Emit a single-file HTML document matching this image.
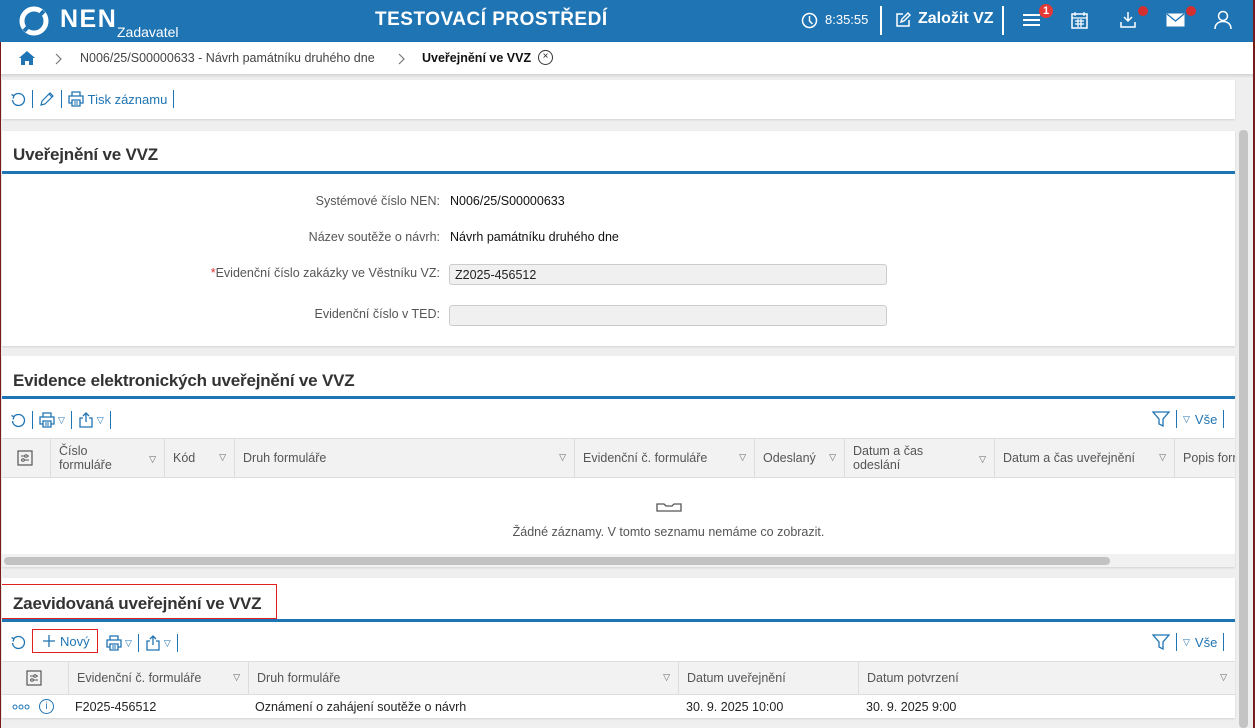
<!DOCTYPE html>
<html><head><meta charset="utf-8"><style>
*{box-sizing:border-box;margin:0;padding:0}
body{width:1255px;height:728px;overflow:hidden;background:#efefef;font-family:"Liberation Sans",sans-serif;font-size:12.5px;color:#222;position:relative}
.abs{position:absolute}
.hdr{left:0;top:0;width:1255px;height:42px;background:#1f74b4;color:#fff}
.panel{background:#fff;left:2px;width:1233px;box-shadow:0 1px 2px rgba(0,0,0,.12)}
.title{font-weight:bold;font-size:17px;color:#333;letter-spacing:-0.2px}
.bline{height:3px;background:#1f74b4;left:0;width:1233px}
.lbl{color:#555;text-align:right;width:260px;left:180px}
.val{left:450px;color:#111}
.inp{left:449px;width:438px;height:21px;background:#f0f0f0;border:1px solid #ccc;border-radius:3px;padding:3px 5px;font-size:12.5px}
.th{background:#f2f2f2;border-top:1px solid #ddd;border-bottom:1px solid #ddd;height:40px}
.c{position:absolute;top:0;height:100%;border-left:1px solid #ddd;color:#555;padding:0 8px;display:flex;align-items:center;white-space:nowrap;overflow:hidden}
.tri{position:absolute;right:8px;top:50%;margin-top:-6px;font-size:9px;color:#666}
.sep{display:inline-block;width:1px;height:18px;background:#1f74b4;vertical-align:middle;margin:0 6px}
.blue{color:#1f74b4}
.tb{display:flex;align-items:center;color:#1f74b4}
.tb svg{display:block}
.st{font-size:9px;margin-left:3px}
</style></head><body>
<svg width="0" height="0" style="position:absolute">
<defs>
<symbol id="ref" viewBox="0 0 16 16"><path d="M4 4.5A6 6 0 1 1 2.5 9" fill="none" stroke="#1f74b4" stroke-width="1.3"/><path d="M1.5 3.5L4 4.8 3 7.5" fill="none" stroke="#1f74b4" stroke-width="1.3"/></symbol>
<symbol id="prn" viewBox="0 0 16 16"><path d="M4 5V1h8v4M4 12H1V5h14v7h-3M4 9h8v6H4z" fill="none" stroke="#1f74b4" stroke-width="1.3"/><path d="M6 11h4M6 13h4" stroke="#1f74b4" stroke-width="1"/></symbol>
<symbol id="shr" viewBox="0 0 16 16"><path d="M5 6H2v9h12V6h-3M8 10V1M5 4l3-3 3 3" fill="none" stroke="#1f74b4" stroke-width="1.3"/></symbol>
<symbol id="fun" viewBox="0 0 18 18"><path d="M1 2h16l-6 7v7l-4 -2V9z" fill="none" stroke="#1f74b4" stroke-width="1.3"/></symbol>
<symbol id="set" viewBox="0 0 16 16"><rect x="1" y="1" width="14" height="14" fill="none" stroke="#555" stroke-width="1.2"/><path d="M4 6h8M4 10h8" stroke="#555"/><circle cx="9" cy="6" r="1.3" fill="#fff" stroke="#555"/><circle cx="6" cy="10" r="1.3" fill="#fff" stroke="#555"/></symbol>
</defs></svg>
<div class="abs" style="right:0;top:0;width:2px;height:728px;background:#7a1b1b;z-index:9"></div>
<div class="abs" style="left:0;top:42px;width:1px;height:686px;background:#7a1b1b;z-index:9"></div>
<!-- header -->
<div class="abs hdr">
 <svg class="abs" style="left:18px;top:5px" width="32" height="32" viewBox="0 0 32 32"><circle cx="16" cy="16" r="12" fill="none" stroke="#fff" stroke-width="5"/><path d="M6 26 L26 6" stroke="#1f74b4" stroke-width="4"/></svg>
 <div class="abs" style="left:60px;top:5px;font-size:25px;font-weight:bold;letter-spacing:1.5px">NEN</div>
 <div class="abs" style="left:117px;top:24px;font-size:14px">Zadavatel</div>
 <div class="abs" style="left:375px;top:9px;font-size:19px;font-weight:bold;letter-spacing:.5px">TESTOVACÍ PROSTŘEDÍ</div>
 <svg class="abs" style="left:801px;top:12px" width="17" height="17" viewBox="0 0 17 17"><circle cx="8.5" cy="8.5" r="7" fill="none" stroke="#fff" stroke-width="1.5"/><path d="M8.5 4v5l3 3" fill="none" stroke="#fff" stroke-width="1.5"/></svg>
 <div class="abs" style="left:825px;top:12px;font-size:13px">8:35:55</div>
 <div class="abs" style="left:880px;top:6px;width:2px;height:29px;background:#fff"></div>
 <svg class="abs" style="left:894px;top:11px" width="18" height="18" viewBox="0 0 18 18"><path d="M9 3H3v12h12V9" fill="none" stroke="#fff" stroke-width="1.5"/><path d="M7 11l1-3 6-6 2 2-6 6z" fill="none" stroke="#fff" stroke-width="1.4"/></svg>
 <div class="abs" style="left:918px;top:10px;font-size:16px;font-weight:bold">Založit VZ</div>
 <div class="abs" style="left:1002px;top:6px;width:2px;height:29px;background:#fff"></div>
 <svg class="abs" style="left:1023px;top:13px" width="18" height="14"><path d="M0 2h17M0 7h17M0 12h17" stroke="#fff" stroke-width="2"/></svg>
 <div class="abs" style="left:1039px;top:4px;width:14px;height:14px;border-radius:7px;background:#e53935;font-size:11px;text-align:center;line-height:14px;font-weight:bold">1</div>
 <svg class="abs" style="left:1071px;top:11px" width="17" height="18" viewBox="0 0 17 18"><rect x="1" y="3" width="15" height="14" fill="none" stroke="#fff" stroke-width="1.5"/><path d="M1 7h15M4 1v4M13 1v4M4 10h9M4 13h9M7 8v8M10 8v8" stroke="#fff" stroke-width="1.2"/></svg>
 <svg class="abs" style="left:1119px;top:11px" width="18" height="18" viewBox="0 0 18 18"><path d="M9 1v9M5 6l4 4 4-4M2 11v5h14v-5" fill="none" stroke="#fff" stroke-width="1.5"/></svg>
 <div class="abs" style="left:1138px;top:6px;width:10px;height:10px;border-radius:5px;background:#d32f2f"></div>
 <svg class="abs" style="left:1166px;top:13px" width="19" height="14"><rect x="0.5" y="0.5" width="18" height="13" fill="#fff"/><path d="M1 1l8.5 7L18 1" fill="none" stroke="#1f74b4" stroke-width="1.3"/></svg>
 <div class="abs" style="left:1186px;top:6px;width:10px;height:10px;border-radius:5px;background:#d32f2f"></div>
 <svg class="abs" style="left:1214px;top:10px" width="18" height="19"><circle cx="9" cy="6" r="4.5" fill="none" stroke="#fff" stroke-width="1.5"/><path d="M1 19c0-5 3.5-7.5 8-7.5s8 2.5 8 7.5" fill="none" stroke="#fff" stroke-width="1.5"/></svg>
</div>
<!-- breadcrumb -->
<div class="abs" style="left:0;top:42px;width:1255px;height:32px;background:#fff;box-shadow:0 2px 3px rgba(0,0,0,.12)">
 <svg class="abs" style="left:18px;top:8px" width="18" height="16" viewBox="0 0 18 16"><path d="M9 1L1 8h2v7h4v-4h4v4h4V8h2z" fill="#1f74b4"/></svg>
 <svg class="abs" style="left:55px;top:11px" width="8" height="12"><path d="M1 1l5 5-5 5" fill="none" stroke="#777" stroke-width="1.2"/></svg>
 <div class="abs" style="left:80px;top:9px;color:#444">N006/25/S00000633 - Návrh památníku druhého dne</div>
 <svg class="abs" style="left:398px;top:11px" width="8" height="12"><path d="M1 1l5 5-5 5" fill="none" stroke="#777" stroke-width="1.2"/></svg>
 <div class="abs" style="left:422px;top:9px;color:#111;font-weight:bold">Uveřejnění ve VVZ</div>
 <div class="abs" style="left:538px;top:8px;width:15px;height:15px;border:1.3px solid #333;border-radius:8px;font-size:10px;text-align:center;line-height:12px">×</div>
</div>
<!-- toolbar panel -->
<div class="abs panel" style="top:80px;height:39px">
 <div class="abs tb" style="left:8px;top:10px;font-size:13px"><svg width="16" height="16"><use href="#ref"/></svg><span class="sep"></span><svg width="16" height="16" viewBox="0 0 16 16"><path d="M2 14l1-4 8-8 3 3-8 8zM10 3l3 3" fill="none" stroke="#1f74b4" stroke-width="1.2"/></svg><span class="sep"></span><svg width="16" height="16"><use href="#prn"/></svg>&nbsp;Tisk záznamu<span class="sep"></span></div>
</div>
<!-- scrollbar -->
<div class="abs" style="left:1239px;top:130px;width:9px;height:598px;background:#c4c4c4;border-radius:4px"></div>
<!-- panel 1 -->
<div class="abs panel" style="top:131px;height:215px">
 <div class="abs title" style="left:11px;top:14px">Uveřejnění ve VVZ</div>
 <div class="abs bline" style="top:40px"></div>
</div>
<div class="abs lbl" style="top:194px">Systémové číslo NEN:</div><div class="abs val" style="top:194px">N006/25/S00000633</div>
<div class="abs lbl" style="top:230px">Název soutěže o návrh:</div><div class="abs val" style="top:230px">Návrh památníku druhého dne</div>
<div class="abs lbl" style="top:266px"><span style="color:#d33">*</span>Evidenční číslo zakázky ve Věstníku VZ:</div><div class="abs inp" style="top:264px">Z2025-456512</div>
<div class="abs lbl" style="top:307px">Evidenční číslo v TED:</div><div class="abs inp" style="top:305px"></div>
<!-- panel 2 -->
<div class="abs panel" style="top:356px;height:211px;overflow:hidden">
 <div class="abs title" style="left:11px;top:15px">Evidence elektronických uveřejnění ve VVZ</div>
 <div class="abs bline" style="top:40px"></div>
 <div class="abs tb" style="left:8px;top:55px"><svg width="16" height="16"><use href="#ref"/></svg><span class="sep"></span><svg width="16" height="16"><use href="#prn"/></svg><span class="st">▽</span><span class="sep"></span><svg width="16" height="16"><use href="#shr"/></svg><span class="st">▽</span><span class="sep"></span></div>
 <div class="abs tb" style="left:1150px;top:54px;font-size:13px"><svg width="18" height="18"><use href="#fun"/></svg><span class="sep"></span><span class="st" style="margin:0 5px 0 0">▽</span>Vše<span class="sep"></span></div>
 <div class="abs th" style="left:-2px;top:82px;width:1240px">
  <div class="c" style="left:0;width:50px;border:0;justify-content:center"><svg width="16" height="16"><use href="#set"/></svg></div>
  <div class="c" style="left:50px;width:114px;line-height:14px">Číslo<br>formuláře<span class="tri">▽</span></div>
  <div class="c" style="left:164px;width:70px">Kód<span class="tri">▽</span></div>
  <div class="c" style="left:234px;width:340px">Druh formuláře<span class="tri">▽</span></div>
  <div class="c" style="left:574px;width:180px">Evidenční č. formuláře<span class="tri">▽</span></div>
  <div class="c" style="left:754px;width:90px">Odeslaný<span class="tri">▽</span></div>
  <div class="c" style="left:844px;width:150px;line-height:14px">Datum a čas<br>odeslání<span class="tri">▽</span></div>
  <div class="c" style="left:994px;width:180px">Datum a čas uveřejnění<span class="tri">▽</span></div>
  <div class="c" style="left:1174px;width:80px">Popis formuláře</div>
 </div>
 <svg class="abs" style="left:654px;top:146px" width="26" height="10"><path d="M1 2h7l2 2h6l2-2h7v7H1z" fill="none" stroke="#555" stroke-width="1.3"/></svg>
 <div class="abs" style="left:0;width:1333px;top:169px;text-align:center;color:#555">Žádné záznamy. V tomto seznamu nemáme co zobrazit.</div>
 <div class="abs" style="left:0;top:198px;width:1233px;height:13px;background:#f1f1f1"></div>
 <div class="abs" style="left:2px;top:201px;width:1106px;height:8px;background:#c2c2c2;border-radius:4px"></div>
</div>
<!-- panel 3 -->
<div class="abs panel" style="top:578px;height:140px;overflow:hidden">
 <div class="abs" style="left:-2px;top:6px;width:277px;height:35px;border:1px solid #e02020"></div>
 <div class="abs title" style="left:11px;top:16px">Zaevidovaná uveřejnění ve VVZ</div>
 <div class="abs bline" style="top:41px"></div>
 <div class="abs tb" style="left:8px;top:56px"><svg width="16" height="16"><use href="#ref"/></svg></div>
 <div class="abs blue" style="left:30px;top:51px;width:66px;height:24px;border:1px solid #e02020;padding:4px 0 0 9px;font-size:13px;display:flex"><svg width="14" height="14" style="margin-right:4px"><path d="M7 1v12M1 7h12" stroke="#1f74b4" stroke-width="1.3"/></svg>Nový</div>
 <div class="abs tb" style="left:104px;top:56px"><svg width="16" height="16"><use href="#prn"/></svg><span class="st">▽</span><span class="sep"></span><svg width="16" height="16"><use href="#shr"/></svg><span class="st">▽</span><span class="sep"></span></div>
 <div class="abs tb" style="left:1150px;top:55px;font-size:13px"><svg width="18" height="18"><use href="#fun"/></svg><span class="sep"></span><span class="st" style="margin:0 5px 0 0">▽</span>Vše<span class="sep"></span></div>
 <div class="abs th" style="left:-2px;top:83px;width:1240px;height:34px">
  <div class="c" style="left:0;width:68px;border:0;justify-content:center"><svg width="16" height="16"><use href="#set"/></svg></div>
  <div class="c" style="left:68px;width:180px">Evidenční č. formuláře<span class="tri">▽</span></div>
  <div class="c" style="left:248px;width:430px">Druh formuláře<span class="tri">▽</span></div>
  <div class="c" style="left:678px;width:180px">Datum uveřejnění</div>
  <div class="c" style="left:858px;width:377px">Datum potvrzení<span class="tri">▽</span></div>
 </div>
 <svg class="abs" style="left:10px;top:126px" width="18" height="6"><circle cx="3" cy="3" r="2" fill="none" stroke="#1f74b4"/><circle cx="9" cy="3" r="2" fill="none" stroke="#1f74b4"/><circle cx="15" cy="3" r="2" fill="none" stroke="#1f74b4"/></svg>
 <div class="abs" style="left:37px;top:121px;width:15px;height:15px;border:1.3px solid #1f74b4;border-radius:8px;font-size:10px;color:#1f74b4;text-align:center;line-height:13px">i</div>
 <div class="abs" style="left:73px;top:122px">F2025-456512</div>
 <div class="abs" style="left:253px;top:122px">Oznámení o zahájení soutěže o návrh</div>
 <div class="abs" style="left:684px;top:122px">30. 9. 2025 10:00</div>
 <div class="abs" style="left:864px;top:122px">30. 9. 2025 9:00</div>
</div>
</body></html>
